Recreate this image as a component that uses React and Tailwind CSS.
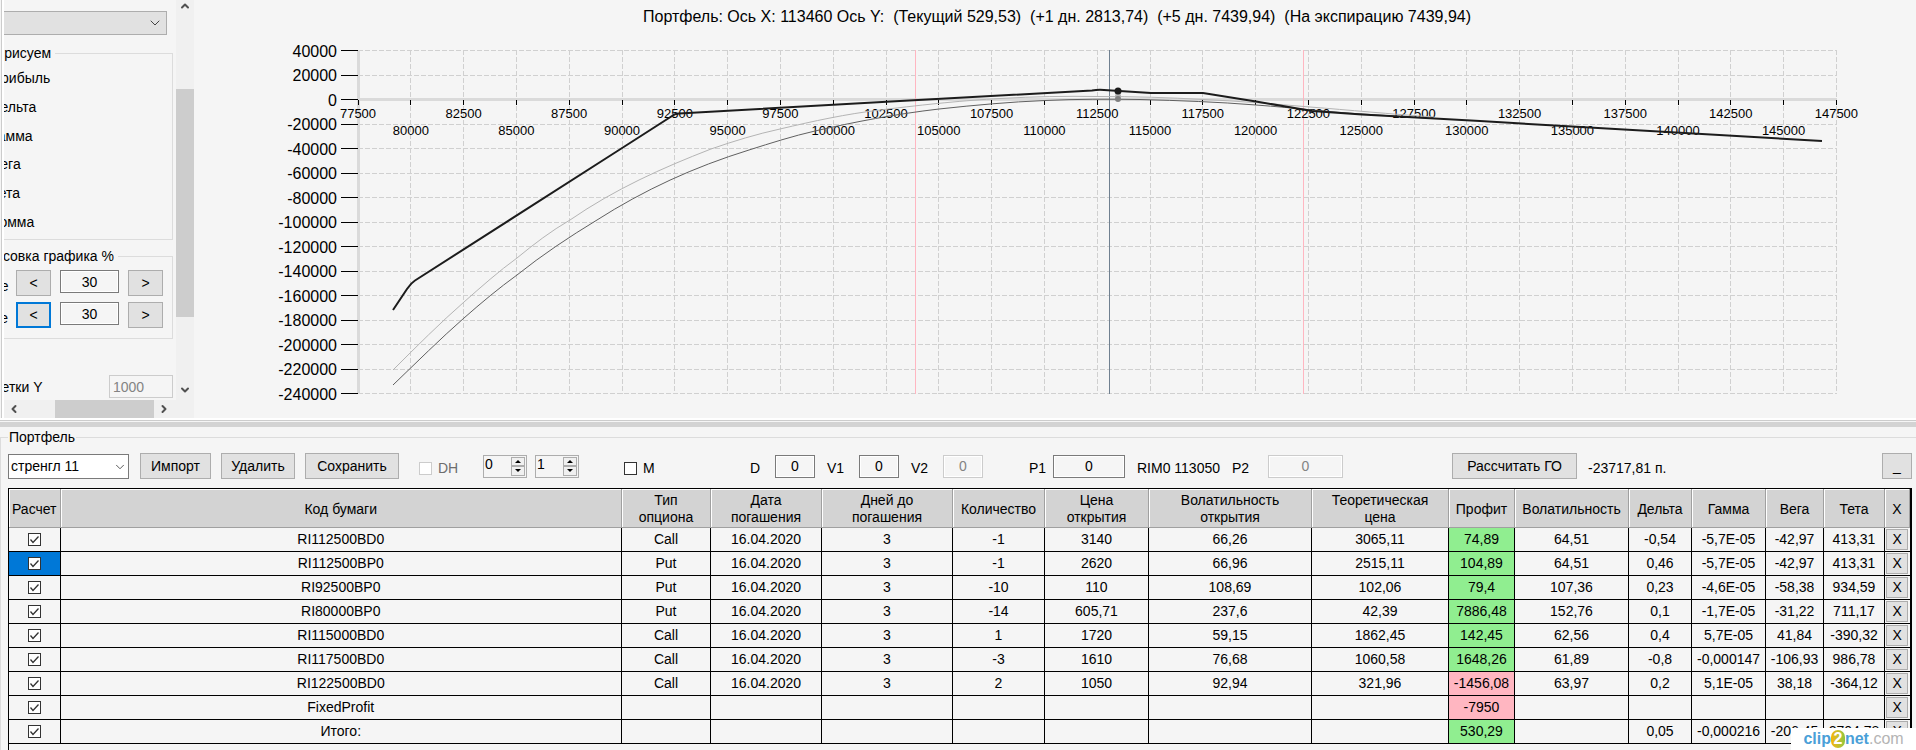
import { useState } from 'react';
import { ChevronDown, ChevronUp, ChevronLeft, ChevronRight } from 'lucide-react';

const GREEKS = ['Прибыль', 'Дельта', 'Гамма', 'Вега', 'Тета', 'Зомма'];

const COLUMNS = [
	{ title: 'Расчет', width: 'w-[51px]' },
	{ title: 'Код бумаги', width: '' },
	{ title: 'Тип\nопциона', width: 'w-[89px]' },
	{ title: 'Дата\nпогашения', width: 'w-[111px]' },
	{ title: 'Дней до\nпогашения', width: 'w-[131px]' },
	{ title: 'Количество', width: 'w-[92px]' },
	{ title: 'Цена\nоткрытия', width: 'w-[104px]' },
	{ title: 'Волатильность\nоткрытия', width: 'w-[163px]' },
	{ title: 'Теоретическая\nцена', width: 'w-[137px]' },
	{ title: 'Профит', width: 'w-[66px]' },
	{ title: 'Волатильность', width: 'w-[114px]' },
	{ title: 'Дельта', width: 'w-[63px]' },
	{ title: 'Гамма', width: 'w-[74px]' },
	{ title: 'Вега', width: 'w-[58px]' },
	{ title: 'Тета', width: 'w-[61px]' },
	{ title: 'X', width: 'w-[25px]' },
];

const ROWS = [
	['RI112500BD0', 'Call', '16.04.2020', '3', '-1', '3140', '66,26', '3065,11', '74,89', '64,51', '-0,54', '-5,7E-05', '-42,97', '413,31'],
	['RI112500BP0', 'Put', '16.04.2020', '3', '-1', '2620', '66,96', '2515,11', '104,89', '64,51', '0,46', '-5,7E-05', '-42,97', '413,31'],
	['RI92500BP0', 'Put', '16.04.2020', '3', '-10', '110', '108,69', '102,06', '79,4', '107,36', '0,23', '-4,6E-05', '-58,38', '934,59'],
	['RI80000BP0', 'Put', '16.04.2020', '3', '-14', '605,71', '237,6', '42,39', '7886,48', '152,76', '0,1', '-1,7E-05', '-31,22', '711,17'],
	['RI115000BD0', 'Call', '16.04.2020', '3', '1', '1720', '59,15', '1862,45', '142,45', '62,56', '0,4', '5,7E-05', '41,84', '-390,32'],
	['RI117500BD0', 'Call', '16.04.2020', '3', '-3', '1610', '76,68', '1060,58', '1648,26', '61,89', '-0,8', '-0,000147', '-106,93', '986,78'],
	['RI122500BD0', 'Call', '16.04.2020', '3', '2', '1050', '92,94', '321,96', '-1456,08', '63,97', '0,2', '5,1E-05', '38,18', '-364,12'],
	['FixedProfit', '', '', '', '', '', '', '', '-7950', '', '', '', '', ''],
	['Итого:', '', '', '', '', '', '', '', '530,29', '', '0,05', '-0,000216', '-206,45', '2704,78'],
];

const PROFIT = 8;

// Chart scales
const xScale = (v) => 164 + ((v - 77500) / 2500) * 52.8;
const yScale = (v) => 99.5 - (v / 20000) * 24.5;
const X_TICKS = Array.from({ length: 29 }, (_, i) => 77500 + i * 2500);
const Y_TICKS = Array.from({ length: 15 }, (_, i) => 40000 - i * 20000);

const EXPIRY =
	'M199 310 L213 289 Q217 283 221 280.500 L425 150 L478 116 Q480 114 485 113.500 L706 101 L898 90.500 Q904 89.500 910 90 L957 93 L1009 93 L1062 101.500 L1118 111 L1168 114.500 L1286 121 L1378 126.500 L1628 141';
const CURRENT =
	'M199 385 C223 362 246 339 270 318 C287 303 305 288 323 275 C348 255 375 237 403 220 C450 190 500 167 555 150 C577 143 599 136 621 131 C660 122 702 114 745 109 C782 105 815 102 851 100.500 C883 99 915 99 946 99.500 C985 100.500 1025 102 1062 105 C1102 108 1135 112 1168 114 L1240 118.500';
const NEXT_DAY =
	'M199 370 C223 346 246 323 270 302 C287 287 305 271 323 258 C340 244 357 231 376 220 C421 189 468 168 517 149 C540 141 563 134 586 129 C620 121 652 114 686 110 C735 104 770 100.500 806 98.500 C840 96.500 872 96 904 96.500 C940 96.500 975 97.500 1009 99.500 C1045 101 1080 104 1116 107 C1155 110 1195 114 1240 117';

function Chart() {
	return (
		<svg viewBox="0 0 1722 418" className="block w-full" role="img" aria-label="График портфеля">
			<text x="863" y="22" textAnchor="middle" className="text-base whitespace-pre">
				Портфель: Ось X: 113460 Ось Y:  (Текущий 529,53)  (+1 дн. 2813,74)  (+5 дн. 7439,94)  (На экспирацию 7439,94)
			</text>
			<g stroke="#d0d0d0" strokeDasharray="5 2" shapeRendering="crispEdges">
				{Y_TICKS.map((v) => (
					<line key={v} x1="164" x2="1643" y1={yScale(v)} y2={yScale(v)} />
				))}
				{X_TICKS.map((v) => (
					<line key={v} x1={xScale(v)} x2={xScale(v)} y1="50" y2="394" />
				))}
			</g>
			<g stroke="#dadada" strokeWidth="3">
				<line x1="164.500" x2="164.500" y1="50" y2="394" />
				<line x1="164" x2="1643" y1="99.500" y2="99.500" />
			</g>
			<g stroke="#000" shapeRendering="crispEdges">
				{Y_TICKS.map((v) => (
					<line key={v} x1="147" x2="164" y1={yScale(v)} y2={yScale(v)} />
				))}
				{X_TICKS.map((v) => (
					<line key={v} x1={xScale(v)} x2={xScale(v)} y1="100" y2="105" />
				))}
			</g>
			<line x1="721.500" x2="721.500" y1="50" y2="394" stroke="#ffb6c1" />
			<line x1="1109.500" x2="1109.500" y1="50" y2="394" stroke="#ffb6c1" />
			<line x1="915.500" x2="915.500" y1="50" y2="394" stroke="#708090" />
			<g className="text-base" textAnchor="end">
				{Y_TICKS.map((v) => (
					<text key={v} x="143" y={yScale(v) + 6}>
						{v}
					</text>
				))}
			</g>
			<g className="text-[13px]" textAnchor="middle">
				{X_TICKS.map((v, i) => (
					<text key={v} x={xScale(v)} y={i % 2 ? 135 : 118}>
						{v}
					</text>
				))}
			</g>
			<g fill="none">
				<path d={NEXT_DAY} stroke="#b4b4b4" />
				<path d={CURRENT} stroke="#606060" />
				<path d={EXPIRY} stroke="#1c1c1c" strokeWidth="2" />
			</g>
			<circle cx="924" cy="96" r="3" fill="#b4b4b4" />
			<circle cx="924" cy="99" r="3" fill="#808080" />
			<circle cx="924" cy="91" r="3.500" fill="#1c1c1c" />
		</svg>
	);
}

function Button({ children, className = '' }) {
	return (
		<button type="button" className={`border border-[#adadad] bg-[#e1e1e1] text-center ${className}`}>
			{children}
		</button>
	);
}

function NumberBox({ label, value, disabled, className = '' }) {
	return (
		<input
			type="text"
			aria-label={label}
			defaultValue={value}
			disabled={disabled}
			className={`h-[23px] border bg-[#f5f5f5] text-center shadow-[inset_0_0_0_1px_#fff] ${
				disabled ? 'border-[#cccccc] text-[#838383]' : 'border-[#7a7a7a]'
			} ${className}`}
		/>
	);
}

function Spinner({ label, value }) {
	return (
		<div className="flex h-[23px] w-11 border border-[#adadad] p-px">
			<input type="text" aria-label={label} defaultValue={value} className="w-0 flex-1 bg-transparent pb-1" />
			<div className="flex w-[14px] flex-col">
				<button type="button" aria-label={`${label} больше`} className="flex flex-1 items-center justify-center border border-[#adadad] bg-[#f0f0f0]">
					<svg viewBox="0 0 6 3" className="h-[3px] w-[6px]"><path d="M0 3 L3 0 L6 3 Z" /></svg>
				</button>
				<button type="button" aria-label={`${label} меньше`} className="flex flex-1 items-center justify-center border border-[#adadad] bg-[#f0f0f0]">
					<svg viewBox="0 0 6 3" className="h-[3px] w-[6px]"><path d="M0 0 L3 3 L6 0 Z" /></svg>
				</button>
			</div>
		</div>
	);
}

function CheckBox({ label, disabled, defaultChecked }) {
	return (
		<span className="relative inline-grid size-[13px] shrink-0">
			<input
				type="checkbox"
				aria-label={label}
				disabled={disabled}
				defaultChecked={defaultChecked}
				className="peer size-[13px] appearance-none border border-[#333333] bg-white disabled:border-[#cccccc]"
			/>
			<svg viewBox="0 0 13 13" className="pointer-events-none absolute inset-0 hidden size-[13px] peer-checked:block">
				<path d="M2.500 6.500 L5 9.500 L10.500 3.500" fill="none" stroke="#333" strokeWidth="1.300" />
			</svg>
		</span>
	);
}

function ZoomRow({ label, focused }) {
	return (
		<div className="flex h-8 items-start">
			<span className="mr-2 w-[38px] pt-[6px] text-right">{label}</span>
			<button
				type="button"
				className={`h-[26px] w-[35px] bg-[#e1e1e1] ${
					focused ? 'border-2 border-[#0078d7]' : 'border border-[#adadad]'
				}`}>
				&lt;
			</button>
			<NumberBox label={label} value="30" className="mx-[9px] w-[59px]" />
			<Button className="h-[26px] w-[35px]">&gt;</Button>
		</div>
	);
}

function Sidebar() {
	const [metric, setMetric] = useState('Прибыль');

	return (
		<aside className="grid w-[193px] shrink-0 grid-cols-[1fr_18px] grid-rows-[1fr_18px] border-l border-[#cccccc] bg-[#f0f0f0]">
			<div className="overflow-hidden border-l-2 border-white bg-[#f5f5f5]">
				{/* Content is scrolled to the right */}
				<div className="mr-[3px] -ml-[39px] pt-[11px] whitespace-nowrap">
					<div className="relative mr-[6px]">
						<select aria-label="Тип графика" className="h-6 w-full appearance-none border border-[#adadad] bg-[#e1e1e1]" />
						<ChevronDown className="pointer-events-none absolute top-1 right-1 size-4 text-[#444444]" strokeWidth={1.5} />
					</div>
					<fieldset className="mt-[9px] h-[196px] border border-[#dcdcdc]">
						<legend className="ml-2 h-[18px] pr-1 pl-[3px] leading-[18px]">Что рисуем</legend>
						<div className="flex h-[174px] flex-col pt-[2px] pl-2">
							{GREEKS.map((name) => (
								<label key={name} className="flex flex-1 items-center gap-1">
									<input
										type="radio"
										name="metric"
										className="size-[13px]"
										checked={metric === name}
										onChange={() => setMetric(name)}
									/>
									{name}
								</label>
							))}
						</div>
					</fieldset>
					<fieldset className="mt-[7px] h-[92px] border border-[#dcdcdc] pl-[4px]">
						<legend className="h-[18px] pr-1 leading-[18px]">Отрисовка графика %</legend>
						<div className="pt-[5px]">
							<ZoomRow label="Выше" />
							<ZoomRow label="Ниже" focused />
						</div>
					</fieldset>
					<label className="mt-9 flex items-center justify-between">
						Шаг сетки Y
						<input type="text" defaultValue="1000" disabled className="h-[23px] w-16 border border-[#cccccc] px-[3px] text-[#838383]" />
					</label>
				</div>
			</div>
			<div className="flex flex-col items-center text-[#505050]">
				<ChevronUp className="size-3 shrink-0" strokeWidth={4} />
				<div className="mt-[77px] h-[228px] w-full bg-[#cdcdcd]" />
				<ChevronDown className="mt-auto mb-1 size-3" strokeWidth={4} />
			</div>
			<div className="flex items-center border-l-2 border-white text-[#505050]">
				<ChevronLeft className="ml-1 size-3" strokeWidth={4} />
				<div className="ml-[35px] h-full w-[99px] bg-[#cdcdcd]" />
				<ChevronRight className="ml-1 size-3" strokeWidth={4} />
			</div>
		</aside>
	);
}

function Toolbar() {
	return (
		<div className="flex h-7 items-center">
			<div className="relative">
				<select aria-label="Портфель" className="h-[25px] w-[121px] appearance-none border border-[#7a7a7a] bg-white pl-[2px]">
					<option>стренгл 11</option>
				</select>
				<ChevronDown className="pointer-events-none absolute top-[6px] right-[2px] size-[14px] text-[#444444]" strokeWidth={1.5} />
			</div>
			<Button className="ml-[11px] h-[26px] w-[71px]">Импорт</Button>
			<Button className="ml-[10px] h-[26px] w-[74px]">Удалить</Button>
			<Button className="ml-[10px] h-[26px] w-[94px]">Сохранить</Button>
			<label className="ml-5 flex w-16 items-center gap-[6px] pt-1 text-[#6d6d6d]">
				<CheckBox disabled />
				DH
			</label>
			<Spinner label="Счетчик 1" value="0" />
			<div className="w-2" />
			<Spinner label="Счетчик 2" value="1" />
			<label className="ml-[45px] flex w-[126px] items-center gap-[6px] pt-1">
				<CheckBox />
				M
			</label>
			<span className="w-[25px] pt-1">D</span>
			<NumberBox label="D" value="0" className="w-10" />
			<span className="ml-3 w-8 pt-1">V1</span>
			<NumberBox label="V1" value="0" className="w-10" />
			<span className="ml-3 w-8 pt-1">V2</span>
			<NumberBox label="V2" value="0" disabled className="w-10" />
			<span className="ml-[46px] w-6 pt-1">P1</span>
			<NumberBox label="P1" value="0" className="w-[72px]" />
			<span className="ml-3 pt-1">RIM0 113050</span>
			<span className="ml-3 w-9 pt-1">P2</span>
			<NumberBox label="P2" value="0" disabled className="w-[75px]" />
			<Button className="ml-[109px] h-[26px] w-[125px]">Рассчитать ГО</Button>
			<span className="ml-[11px] pt-1">-23717,81 п.</span>
			<Button className="ml-auto h-[26px] w-[30px]">_</Button>
		</div>
	);
}

function PositionsTable() {
	return (
		<table className="w-full table-fixed border-collapse text-center">
			<thead>
				<tr className="h-[38px] bg-[#d3d3d3]">
					{COLUMNS.map((col, i) => (
						<th
							key={i}
							className={`overflow-hidden border-r border-b border-[#a0a0a0] px-0 pt-[3px] pb-0 text-center leading-[17px] font-normal whitespace-pre shadow-[inset_1px_1px_0_#fff] ${col.width}`}>
							{col.title}
						</th>
					))}
				</tr>
			</thead>
			<tbody>
				{ROWS.map((row, r) => (
					<tr key={row[0]} className="h-6">
						<td className={`border-r border-b border-black p-0 ${r === 1 ? 'bg-[#0078d7]' : ''}`}>
							<div className="flex justify-center">
								<CheckBox label={row[0]} defaultChecked />
							</div>
						</td>
						{row.map((value, c) => (
							<td
								key={c}
								className={`border-r border-b border-black p-0 leading-[22px] whitespace-nowrap ${
									c === PROFIT ? (value.startsWith('-') ? 'bg-[#ffb6c1]' : 'bg-[#90ee90]') : ''
								}`}>
								{value}
							</td>
						))}
						<td className="border-b border-black p-0">
							<div className="flex justify-center">
								<button type="button" className="h-[21px] w-[22px] border border-[#adadad] bg-[#e1e1e1] leading-[19px]">
									X
								</button>
							</div>
						</td>
					</tr>
				))}
			</tbody>
		</table>
	);
}

function Watermark() {
	return (
		<div className="absolute right-0 bottom-0 flex h-[22px] w-[125px] items-center justify-center bg-white text-base leading-none">
			<span className="font-bold text-[#4a9fd8]">clip</span>
			<span className="flex h-[18px] w-[14px] items-center justify-center rounded-full bg-linear-to-r from-[#f7b500] to-[#8cc63f] font-bold text-white">2</span>
			<span className="font-bold text-[#4a9fd8]">net</span>
			<span className="text-[#b4b4b4]">.com</span>
		</div>
	);
}

export default function App() {
	return (
		<div className="relative flex h-screen flex-col overflow-hidden bg-[#f5f5f5] font-['Liberation_Sans',Arial,sans-serif] text-sm text-black">
			<div className="flex pl-px">
				<Sidebar />
				<main className="min-w-0 flex-1">
					<Chart />
				</main>
			</div>
			<div className="h-[3px] shrink-0 border-b border-[#cccccc] bg-white" />
			<div className="mt-px h-[5px] shrink-0 bg-[#d3d3d3]" />
			<fieldset className="flex min-w-0 flex-1 flex-col border-t border-l border-[#dcdcdc] pr-1 pl-[7px]">
				<legend className="h-5 px-px leading-5">Портфель</legend>
				<div className="pt-[5px] pb-2">
					<Toolbar />
				</div>
				<div className="flex-1 border-t border-r-2 border-l border-black">
					<PositionsTable />
				</div>
			</fieldset>
			<Watermark />
		</div>
	);
}
